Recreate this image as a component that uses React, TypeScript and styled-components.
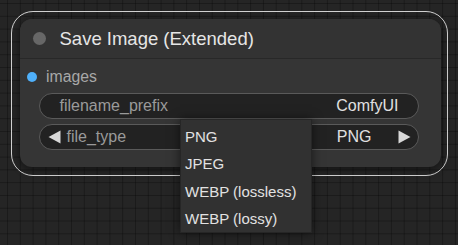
import React from "react";
import styled, { createGlobalStyle } from "styled-components";

const Global = createGlobalStyle`
  html, body { margin: 0; padding: 0; background: #242424; }
  body { font-family: "Liberation Sans", Arial, Helvetica, sans-serif; }
`;

const Canvas = styled.div`
  position: relative;
  width: 458px;
  height: 245px;
  overflow: hidden;
  background-color: #252525;
  background-image:
    linear-gradient(to right, rgba(0, 0, 0, 0.28) 1px, transparent 1px),
    linear-gradient(to bottom, rgba(0, 0, 0, 0.28) 1px, transparent 1px);
  background-size: 12.8px 12.8px;
  background-position: 7px 3px;
  padding: 11px 0 0 11px;
  box-sizing: border-box;
`;

const Selection = styled.div`
  width: 437px;
  height: 165px;
  box-sizing: border-box;
  border: 1.8px solid #d2d2d2;
  border-radius: 22px;
  padding: 7px 6px 7px 7.5px;
`;

const Node = styled.div`
  width: 421px;
  height: 148px;
  background: #353535;
  border-radius: 12px;
  overflow: hidden;
  box-shadow: 0 2px 8px rgba(0, 0, 0, 0.5);
  display: flex;
  flex-direction: column;
`;

const TitleBar = styled.div`
  height: 39px;
  background: #333333;
  border-bottom: 1px solid #282828;
  display: flex;
  align-items: center;
  padding-left: 13px;
  gap: 14px;
  flex-shrink: 0;
`;

const TitleDot = styled.div`
  width: 13px;
  height: 13px;
  border-radius: 50%;
  background: #676767;
`;

const TitleText = styled.div`
  color: #e6e6e6;
  font-size: 18.5px;
  line-height: 20px;
`;

const Body = styled.div`
  display: flex;
  flex-direction: column;
  padding: 8px 22px 17px 0;
`;

const InputRow = styled.div`
  height: 20px;
  display: flex;
  align-items: center;
  padding-left: 7.5px;
  gap: 9px;
`;

const SlotDot = styled.div`
  width: 10px;
  height: 10px;
  border-radius: 50%;
  background: #4fb0fa;
`;

const SlotLabel = styled.div`
  color: #a8a8a8;
  font-size: 15.8px;
`;

const Widgets = styled.div`
  display: flex;
  flex-direction: column;
  gap: 5px;
  margin-top: 6px;
  padding-left: 19px;
`;

const Widget = styled.div<{ $combo?: boolean }>`
  height: 26px;
  box-sizing: border-box;
  background: #222222;
  border: 1px solid #5a5a5a;
  border-radius: 13px;
  display: flex;
  align-items: center;
  padding: 0 ${(p) => (p.$combo ? "7px" : "19px")} 0
    ${(p) => (p.$combo ? "8px" : "20px")};
  font-size: 16px;
`;

const WLabel = styled.div`
  color: #9a9a9a;
  flex: 1;
`;

const WValue = styled.div`
  color: #e0e0e0;
`;

const Arrow = styled.svg<{ $side: "left" | "right" }>`
  width: 13px;
  height: 14px;
  flex-shrink: 0;
  margin: ${(p) => (p.$side === "left" ? "0 6px 0 0" : "0 0 0 26px")};
`;

const Menu = styled.div`
  position: absolute;
  left: 180px;
  top: 119px;
  width: 132px;
  height: 114px;
  box-sizing: border-box;
  background: #313131;
  border: 1px solid #262626;
  box-shadow: 0 0 10px rgba(0, 0, 0, 0.55);
  padding-top: 3px;
  display: flex;
  flex-direction: column;
`;

const MenuItem = styled.div`
  height: 28px;
  display: flex;
  align-items: center;
  padding-left: 4px;
  color: #e2e2e2;
  font-size: 15px;
`;

const LeftArrow = () => (
  <Arrow $side="left" viewBox="0 0 13 14">
    <polygon points="12.5,0.5 12.5,13.5 0.5,7" fill="#d8d8d8" />
  </Arrow>
);

const RightArrow = () => (
  <Arrow $side="right" viewBox="0 0 13 14">
    <polygon points="0.5,0.5 0.5,13.5 12.5,7" fill="#d8d8d8" />
  </Arrow>
);

export default function App() {
  const options = ["PNG", "JPEG", "WEBP (lossless)", "WEBP (lossy)"];
  return (
    <>
      <Global />
      <Canvas>
        <Selection>
          <Node>
            <TitleBar>
              <TitleDot />
              <TitleText>Save Image (Extended)</TitleText>
            </TitleBar>
            <Body>
              <InputRow>
                <SlotDot />
                <SlotLabel>images</SlotLabel>
              </InputRow>
              <Widgets>
                <Widget>
                  <WLabel>filename_prefix</WLabel>
                  <WValue>ComfyUI</WValue>
                </Widget>
                <Widget $combo>
                  <LeftArrow />
                  <WLabel>file_type</WLabel>
                  <WValue>PNG</WValue>
                  <RightArrow />
                </Widget>
              </Widgets>
            </Body>
          </Node>
        </Selection>
        <Menu>
          {options.map((o) => (
            <MenuItem key={o}>{o}</MenuItem>
          ))}
        </Menu>
      </Canvas>
    </>
  );
}
